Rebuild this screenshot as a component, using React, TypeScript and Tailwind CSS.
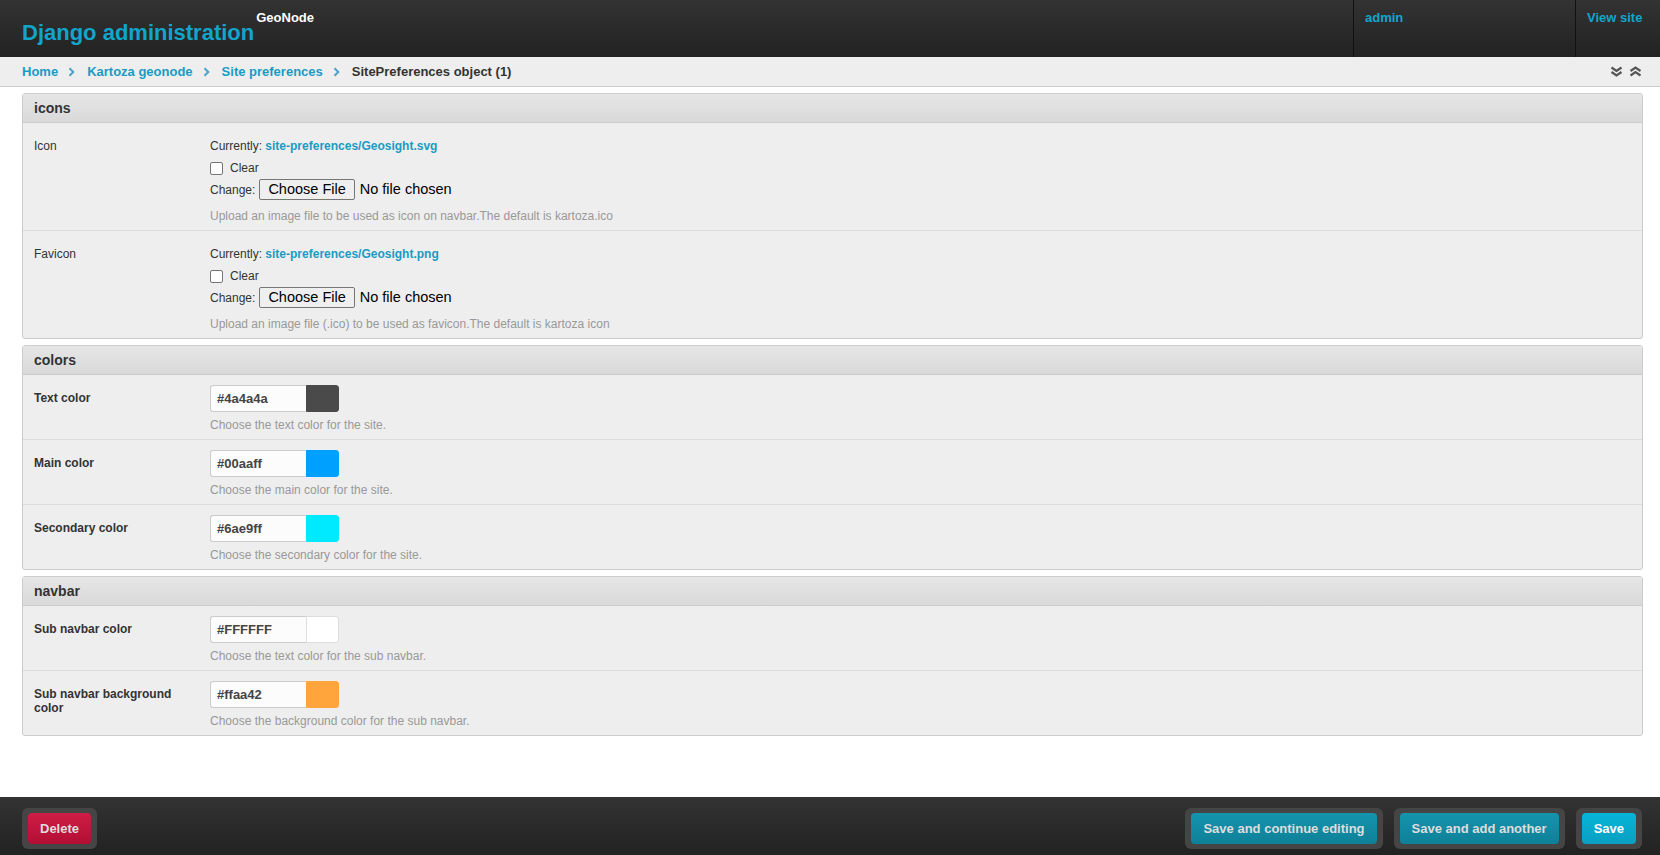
import React from "react";

type FileField = {
  label: string;
  current: string;
  help: string;
};

type ColorField = {
  label: string;
  value: string;
  swatch: string;
  help: string;
};

const fileFields: FileField[] = [
  {
    label: "Icon",
    current: "site-preferences/Geosight.svg",
    help: "Upload an image file to be used as icon on navbar.The default is kartoza.ico",
  },
  {
    label: "Favicon",
    current: "site-preferences/Geosight.png",
    help: "Upload an image file (.ico) to be used as favicon.The default is kartoza icon",
  },
];

const colorFields: ColorField[] = [
  { label: "Text color", value: "#4a4a4a", swatch: "bg-[#4a4a4a] border-[#4a4a4a]", help: "Choose the text color for the site." },
  { label: "Main color", value: "#00aaff", swatch: "bg-[#00a0ff] border-[#00a0ff]", help: "Choose the main color for the site." },
  { label: "Secondary color", value: "#6ae9ff", swatch: "bg-[#00eaff] border-[#00eaff]", help: "Choose the secondary color for the site." },
];

const navbarFields: ColorField[] = [
  { label: "Sub navbar color", value: "#FFFFFF", swatch: "bg-white border-[#ddd]", help: "Choose the text color for the sub navbar." },
  { label: "Sub navbar background color", value: "#ffaa42", swatch: "bg-[#ffa53c] border-[#ffa53c]", help: "Choose the background color for the sub navbar." },
];

function Crumb() {
  return (
    <svg width="7" height="10" viewBox="0 0 7 10" className="ml-[10px] mr-[12px]">
      <path d="M1.5 1.2 L5.3 5 L1.5 8.8" fill="none" stroke="#4aa3c8" strokeWidth="2" />
    </svg>
  );
}

function Fieldset({ title, children }: { title: string; children: React.ReactNode }) {
  return (
    <div className="mb-[6px] rounded-[3px] border border-[#ccc] bg-[#eee]">
      <div className="flex h-[29px] items-center border-b border-[#ccc] bg-gradient-to-b from-[#e6e6e6] to-[#d9d9d9] pl-[11px] text-[14px] font-bold text-[#333]">
        {title}
      </div>
      {children}
    </div>
  );
}

function FileRow({ field, first }: { field: FileField; first: boolean }) {
  return (
    <div className={first ? "flex pt-[16px] pb-[7px]" : "flex border-t border-[#dcdcdc] pt-[16px] pb-[7px]"}>
      <div className="w-[187px] shrink-0 pl-[11px] pr-[16px] text-[12px] leading-[14px] text-[#333]">{field.label}</div>
      <div className="text-[12px] text-[#333]">
        <div className="leading-[14px]">
          Currently: <a className="font-bold text-[#1a9bc4]">{field.current}</a>
        </div>
        <div className="mt-[5px] flex h-[20px] items-center">
          <span className="h-[13px] w-[13px] rounded-[2px] border border-[#767676] bg-white" />
          <span className="ml-[7px]">Clear</span>
        </div>
        <div className="mt-[1px] flex h-[21px] items-center">
          <span>Change:</span>
          <span className="ml-[4px] flex h-[21px] items-center rounded-[2px] border border-[#767676] bg-[#efefef] px-[8px] text-[14.5px] text-black">
            Choose File
          </span>
          <span className="ml-[5px] text-[14.5px] text-black">No file chosen</span>
        </div>
        <div className="mt-[9px] leading-[14px] text-[#999]">{field.help}</div>
      </div>
    </div>
  );
}

function ColorRow({ field, first }: { field: ColorField; first: boolean }) {
  return (
    <div className={first ? "flex pt-[10px] pb-[7px]" : "flex border-t border-[#dcdcdc] pt-[10px] pb-[7px]"}>
      <div className="w-[187px] shrink-0 pl-[11px] pr-[16px] pt-[6px] text-[12px] font-bold leading-[14px] text-[#333]">
        {field.label}
      </div>
      <div>
        <div className="flex h-[27px]">
          <div className="flex w-[96px] items-center rounded-l-[3px] border border-r-0 border-[#ccc] bg-[#fcfcfc] pl-[6px] text-[13px] font-bold text-[#444]">
            {field.value}
          </div>
          <div className={"w-[33px] rounded-r-[3px] border " + field.swatch} />
        </div>
        <div className="mt-[6px] text-[12px] leading-[14px] text-[#999]">{field.help}</div>
      </div>
    </div>
  );
}

function FooterButton({ label, kind }: { label: string; kind: "delete" | "save" | "primary" }) {
  const inner =
    kind === "delete"
      ? "bg-gradient-to-b from-[#cf1d46] to-[#b20e34] text-[#ddd]"
      : kind === "primary"
        ? "bg-gradient-to-b from-[#05b5da] to-[#0a9fc0] text-white"
        : "bg-gradient-to-b from-[#1594ad] to-[#0e8098] text-[#ddd]";
  return (
    <div className="rounded-[6px] bg-[#454545] px-[6px] py-[5px]">
      <div className={"flex h-[31px] items-center rounded-[4px] px-[12px] text-[13px] font-bold " + inner}>{label}</div>
    </div>
  );
}

export default function App() {
  return (
    <div className="flex h-screen flex-col bg-white font-['Liberation_Sans',Arial,sans-serif] text-[#333]">
      {/* Header */}
      <header className="flex h-[57px] shrink-0 bg-gradient-to-b from-[#333] to-[#222]">
        <div className="flex flex-1 items-start pl-[22px]">
          <span className="pt-[19px] text-[22px] font-bold leading-[28px] text-[#12a5cc]">Django administration</span>
          <span className="ml-[2px] pt-[10px] text-[13px] font-bold leading-[16px] text-white">GeoNode</span>
        </div>
        <div className="w-[222px] border-l border-[#111] pl-[11px] pt-[10px] text-[13px] font-bold leading-[16px] text-[#12a5cc]">
          admin
        </div>
        <div className="w-[85px] border-l border-[#111] pl-[11px] pt-[10px] text-[13px] font-bold leading-[16px] text-[#12a5cc]">
          View site
        </div>
      </header>

      {/* Breadcrumbs */}
      <div className="flex h-[30px] shrink-0 items-center border-b border-[#ccc] bg-[#eee] pl-[22px] pr-[18px] text-[13px] font-bold">
        <a className="text-[#1a9bc4]">Home</a>
        <Crumb />
        <a className="text-[#1a9bc4]">Kartoza geonode</a>
        <Crumb />
        <a className="text-[#1a9bc4]">Site preferences</a>
        <Crumb />
        <span className="text-[#333]">SitePreferences object (1)</span>
        <div className="ml-auto flex items-center gap-[6px]">
          <svg width="13" height="11" viewBox="0 0 13 11">
            <path d="M1.5 1.5 L6.5 5 L11.5 1.5 M1.5 6 L6.5 9.5 L11.5 6" fill="none" stroke="#555" strokeWidth="2.2" />
          </svg>
          <svg width="13" height="11" viewBox="0 0 13 11">
            <path d="M1.5 5 L6.5 1.5 L11.5 5 M1.5 9.5 L6.5 6 L11.5 9.5" fill="none" stroke="#555" strokeWidth="2.2" />
          </svg>
        </div>
      </div>

      {/* Content */}
      <main className="flex-1 pl-[22px] pr-[17px] pt-[6px]">
        <Fieldset title="icons">
          {fileFields.map((f, i) => (
            <FileRow key={f.label} field={f} first={i === 0} />
          ))}
        </Fieldset>
        <Fieldset title="colors">
          {colorFields.map((f, i) => (
            <ColorRow key={f.label} field={f} first={i === 0} />
          ))}
        </Fieldset>
        <Fieldset title="navbar">
          {navbarFields.map((f, i) => (
            <ColorRow key={f.label} field={f} first={i === 0} />
          ))}
        </Fieldset>
      </main>

      {/* Submit row */}
      <footer className="flex h-[58px] shrink-0 items-start bg-gradient-to-b from-[#333] to-[#222] pl-[22px] pr-[18px] pt-[11px]">
        <FooterButton label="Delete" kind="delete" />
        <div className="ml-auto flex gap-[11px]">
          <FooterButton label="Save and continue editing" kind="save" />
          <FooterButton label="Save and add another" kind="save" />
          <FooterButton label="Save" kind="primary" />
        </div>
      </footer>
    </div>
  );
}
